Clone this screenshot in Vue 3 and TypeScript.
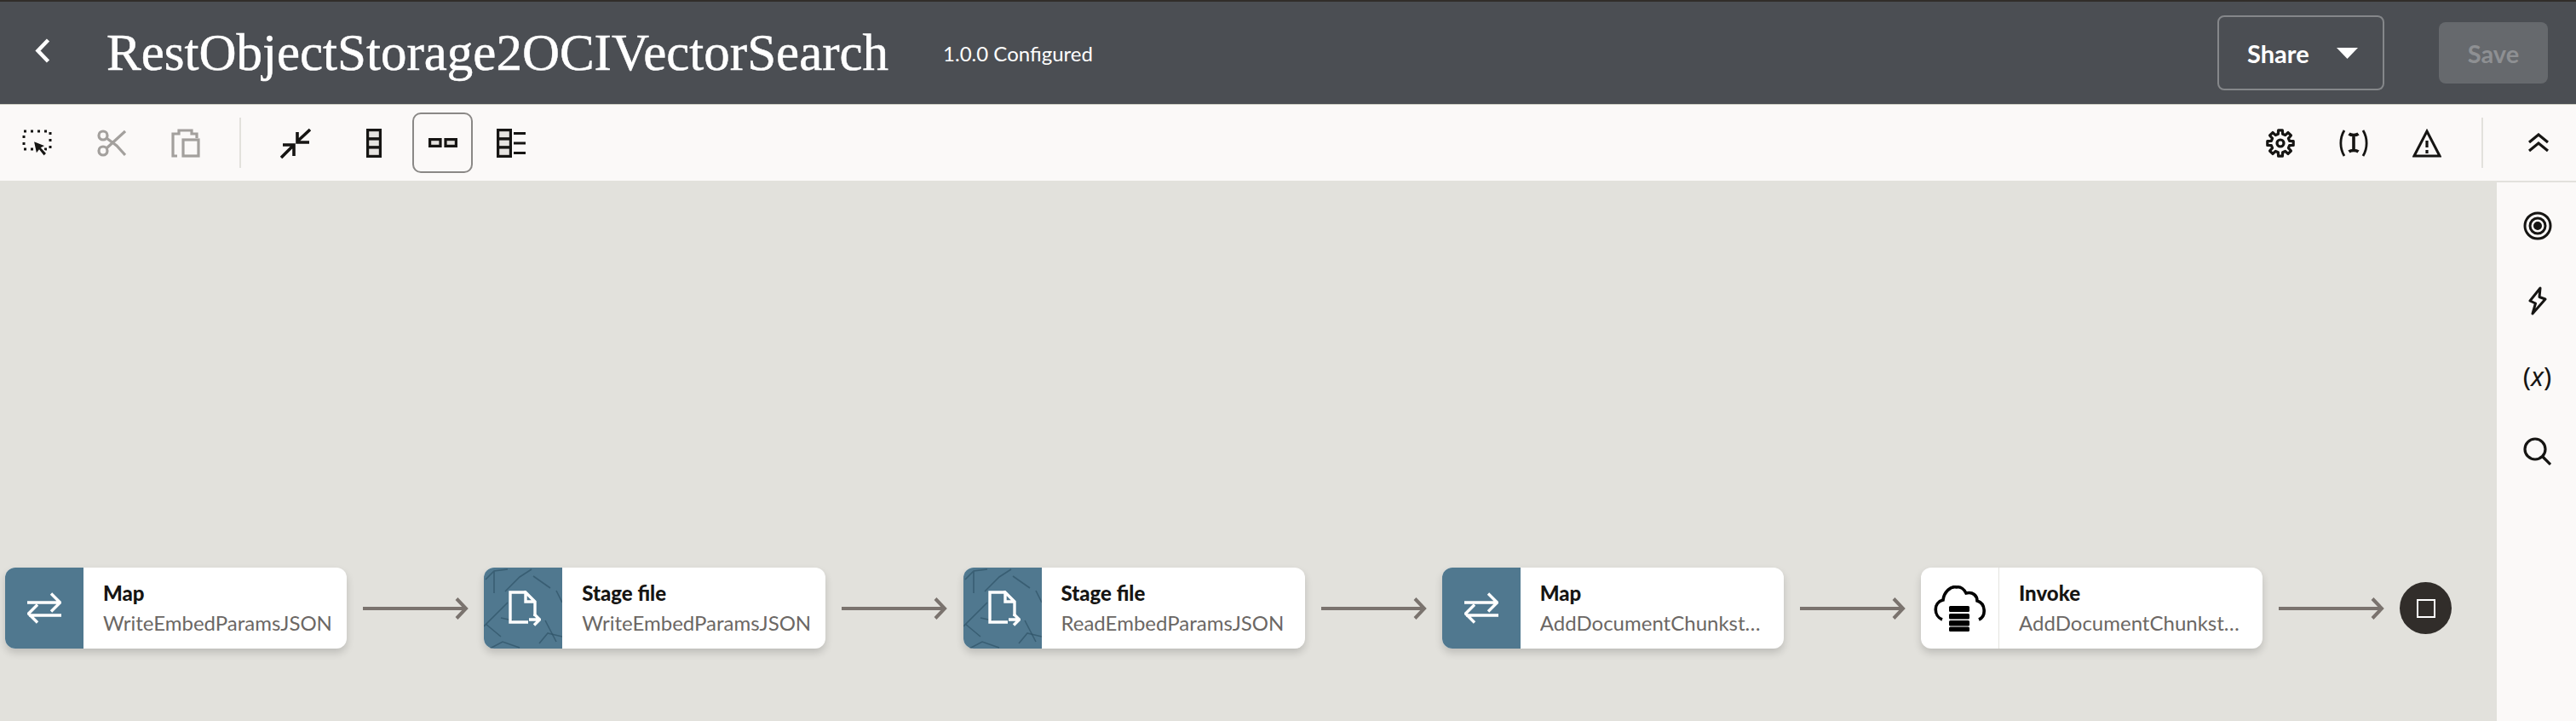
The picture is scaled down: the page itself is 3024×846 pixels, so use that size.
<template>
  <div class="app">
    <header class="header">
      <button class="back">
        <svg width="18" height="29" viewBox="0 0 18 29"><path d="M15.5 2 L3.5 14.5 L15.5 27" fill="none" stroke="#fff" stroke-width="4.5" /></svg>
      </button>
      <h1 class="title">RestObjectStorage2OCIVectorSearch</h1>
      <span class="version">1.0.0 Configured</span>
      <button class="share">
        Share
        <svg width="25" height="13" viewBox="0 0 25 13"><path d="M0 0 H25 L12.5 13 Z" fill="#fff" /></svg>
      </button>
      <button class="save">Save</button>
    </header>

    <div class="toolbar">
      <button class="tool">
        <svg width="36" height="34" viewBox="0 0 36 34">
          <rect x="2" y="3" width="31" height="21" fill="none" stroke="#161513" stroke-width="3" stroke-dasharray="3 5" />
          <path d="M13 14 L28 20 L23 22.5 L29 29 L25.5 32.5 L20 25.5 L16.5 30 Z" fill="#161513" stroke="#fbf9f8" stroke-width="1.5" />
        </svg>
      </button>
      <button class="tool">
        <svg width="34" height="32" viewBox="0 0 34 32" fill="none" stroke="#a3a09d" stroke-width="3.2">
          <circle cx="7" cy="7" r="5" />
          <circle cx="7" cy="25" r="5" />
          <path d="M11 10 L23 19 L33 30 M11 22 L33 2" />
        </svg>
      </button>
      <button class="tool">
        <svg width="34" height="34" viewBox="0 0 34 34" fill="none" stroke="#a3a09d" stroke-width="3.2">
          <path d="M7 32 H2 V6 H9 V2 H24 V6 H30 V11" />
          <rect x="14" y="13" width="18" height="19" />
        </svg>
      </button>
      <span class="divider"></span>
      <button class="tool">
        <svg width="36" height="36" viewBox="0 0 36 36" fill="none" stroke="#161513" stroke-width="3.6">
          <path d="M35 2 L20 16 M20 5 V17 H34" />
          <path d="M1 35 L16 20 M16 33 V20 H3" />
        </svg>
      </button>
      <button class="tool wide">
        <svg width="18" height="34" viewBox="0 0 18 34" fill="#e6e4e1" stroke="#161513" stroke-width="3.2">
          <rect x="1.6" y="1.6" width="14.8" height="10.4" /><rect x="1.6" y="12" width="14.8" height="10" /><rect x="1.6" y="22" width="14.8" height="10.4" />
        </svg>
      </button>
      <button class="tool active">
        <svg width="34" height="11" viewBox="0 0 34 11" fill="#e6e4e1" stroke="#161513" stroke-width="3.2">
          <rect x="1.6" y="1.6" width="12.4" height="7.8" /><rect x="20" y="1.6" width="12.4" height="7.8" />
        </svg>
      </button>
      <button class="tool near">
        <svg width="34" height="34" viewBox="0 0 34 34" fill="#e6e4e1" stroke="#161513" stroke-width="3.2">
          <rect x="1.6" y="1.6" width="14.8" height="10.4" /><rect x="1.6" y="12" width="14.8" height="10" /><rect x="1.6" y="22" width="14.8" height="10.4" />
          <path d="M20 5.5 H34 M20 17 H34 M20 28.5 H34" fill="none" />
        </svg>
      </button>
      <div class="toolbar-right">
        <button class="tool">
          <svg width="34" height="34" viewBox="0 0 34 34" fill="none" stroke="#161513">
            <circle cx="17" cy="17" r="4" stroke-width="3.2" />
            <path :d="gearPath" stroke-width="3.2" stroke-linejoin="round" />
          </svg>
        </button>
        <button class="tool">
          <svg width="34" height="32" viewBox="0 0 34 32" fill="none" stroke="#161513" stroke-width="2.8">
            <path d="M6 1 C0.5 10 0.5 22 6 31 M28 1 C33.5 10 33.5 22 28 31" />
            <path d="M11.5 5 C14 7 20 7 22.5 5 M11.5 26 C14 24 20 24 22.5 26 M17 6 V25" stroke-width="3.6" />
          </svg>
        </button>
        <button class="tool">
          <svg width="34" height="34" viewBox="0 0 34 34" fill="none" stroke="#161513" stroke-width="3">
            <path d="M17 3 L32 32 H2 Z" stroke-linejoin="miter" />
            <path d="M17 14 V22 M17 25 V29" stroke-width="3.2" />
          </svg>
        </button>
        <span class="divider right"></span>
        <button class="tool last">
          <svg width="24" height="23" viewBox="0 0 24 23" fill="none" stroke="#161513" stroke-width="3.2">
            <path d="M1 11 L12 2 L23 11 M1 21 L12 12 L23 21" />
          </svg>
        </button>
      </div>
    </div>

    <div class="body">
      <main class="canvas">
        <div class="flow">
          <template v-for="node in nodes" :key="node.name + node.type">
            <div class="node">
              <div class="node-icon" :class="node.kind">
                <svg v-if="node.kind === 'stage'" class="pattern" width="92" height="95" viewBox="0 0 92 95" fill="none" stroke="#2f5367" stroke-opacity="0.7" stroke-width="1.6">
                  <path v-for="d in patternLines" :key="d" :d="d" />
                </svg>
                <svg v-if="node.kind === 'map'" width="40" height="37" viewBox="0 0 40 37" fill="none" stroke="#fff" stroke-width="3.4">
                  <path d="M0 12 H38 M28 1.5 L38.5 12 L28 22.5" />
                  <path d="M40 27 H2 M12 14.5 L1.5 25 L12 35.5" />
                </svg>
                <svg v-else-if="node.kind === 'stage'" class="glyph" width="38" height="42" viewBox="0 0 38 42" fill="none" stroke="#fff" stroke-width="3.4">
                  <path d="M20 2 H2 V37 H23 M31 30 V13 L20 2 V13 H31" />
                  <path d="M24 34 H36 M30 27.5 L36.5 34 L30 40.5" />
                </svg>
                <svg v-else width="62" height="54" viewBox="0 0 62 54">
                  <path d="M10 40 C0 36 -1 20 11 17 C12 8 20 0 27 2 C32 1 36 5 38 9 C46 7 51 12 51 18 C61 21 62 36 53 40" fill="none" stroke="#000" stroke-width="3.6" />
                  <rect x="18" y="24" width="24" height="7" rx="1.5" />
                  <rect x="18" y="33" width="24" height="6.5" rx="1.5" />
                  <rect x="18" y="41" width="24" height="6.5" rx="1.5" />
                  <rect x="18" y="48.5" width="24" height="5.5" rx="1.5" />
                </svg>
              </div>
              <div class="node-text">
                <div class="node-type">{{ node.type }}</div>
                <div class="node-name">{{ node.name }}</div>
              </div>
            </div>
            <div class="link">
              <svg width="124" height="26" viewBox="0 0 124 26" fill="none" stroke="#7a736e" stroke-width="4">
                <path d="M0 13 H121 M110 1.5 L121 13 L110 24.5" />
              </svg>
            </div>
          </template>
          <div class="end">
            <span class="end-square"></span>
          </div>
        </div>
      </main>
      <aside class="sidebar">
        <button class="side-btn">
          <svg width="34" height="34" viewBox="0 0 34 34" fill="none" stroke="#161513" stroke-width="3">
            <circle cx="17" cy="17" r="15" /><circle cx="17" cy="17" r="9" /><circle cx="17" cy="17" r="3.5" fill="#161513" />
          </svg>
        </button>
        <button class="side-btn">
          <svg width="22" height="34" viewBox="0 0 22 34" fill="none" stroke="#161513" stroke-width="3" stroke-linejoin="round">
            <path d="M14 2 L2 17 L8.5 20 L5 32 L20 15 L13 12.5 Z" />
          </svg>
        </button>
        <button class="side-btn">
          <span class="var-icon">(<i>x</i>)</span>
        </button>
        <button class="side-btn">
          <svg width="33" height="33" viewBox="0 0 33 33" fill="none" stroke="#161513" stroke-width="3.2">
            <circle cx="14" cy="14" r="12" /><path d="M23 23 L32 32" />
          </svg>
        </button>
      </aside>
    </div>
  </div>
</template>

<script setup lang="ts">
interface FlowNode {
  kind: 'map' | 'stage' | 'invoke';
  type: string;
  name: string;
}

const nodes: FlowNode[] = [
  { kind: 'map', type: 'Map', name: 'WriteEmbedParamsJSON' },
  { kind: 'stage', type: 'Stage file', name: 'WriteEmbedParamsJSON' },
  { kind: 'stage', type: 'Stage file', name: 'ReadEmbedParamsJSON' },
  { kind: 'map', type: 'Map', name: 'AddDocumentChunkstoVectorSearch' },
  { kind: 'invoke', type: 'Invoke', name: 'AddDocumentChunkstoVectorSearch' }
];

// the faint scratch texture on the stage file tile
const patternLines = [
  'M12 4 L12 30 M2 14 L12 4 L28 2',
  'M25 28 L42 11 L56 2',
  'M0 69 L28 41 M2 66 L20 81',
  'M20 59 L34 62',
  'M72 62 L85 87',
  'M85 27 L92 41 M58 10 L78 24',
  'M65 89 L75 77 L92 81',
  'M7 95 L22 87 L42 94'
];

// eight tooth gear outline, centred in a 34 box
function buildGear(): string {
  const pt = (deg: number, r: number) => {
    const a = (deg * Math.PI) / 180;
    return `${(17 + r * Math.cos(a)).toFixed(2)} ${(17 + r * Math.sin(a)).toFixed(2)}`;
  };
  const parts: string[] = [];
  for (let i = 0; i < 8; i++) {
    const c = i * 45 - 90;
    parts.push(pt(c - 14, 11), pt(c - 9, 15.4), pt(c + 9, 15.4), pt(c + 14, 11));
  }
  return `M${parts.join(' L')} Z`;
}

const gearPath = buildGear();
</script>

<style>
html,
body {
  margin: 0;
  background: #e2e1dc;
}
</style>

<style scoped>
.app {
  width: 3024px;
  height: 846px;
  display: flex;
  flex-direction: column;
  overflow: hidden;
  font-family: Lato, "Noto Sans", sans-serif;
  color: #161513;
}

button {
  font-family: inherit;
  background: none;
  border: none;
  padding: 0;
}

.header {
  box-sizing: border-box;
  height: 123px;
  flex-shrink: 0;
  display: flex;
  align-items: center;
  background: #4b4e53;
  border-top: 2px solid #312d2a;
  border-bottom: 1px solid #cfcfc4;
  padding: 0 33px 0 41px;
}

.back {
  display: flex;
  margin-bottom: 6px;
}

.title {
  margin: 0 0 0 66px;
  font-family: "Liberation Serif", serif;
  font-size: 61px;
  font-weight: 400;
  -webkit-text-stroke: 0.5px #fff;
  color: #fff;
  white-space: nowrap;
}

.version {
  margin-left: 64px;
  font-size: 24px;
  color: #fff;
}

.share {
  box-sizing: border-box;
  margin-left: auto;
  width: 196px;
  height: 88px;
  display: flex;
  align-items: center;
  gap: 32px;
  padding-left: 33px;
  border: 2px solid #85878a;
  border-radius: 8px;
  color: #fff;
  font-size: 29px;
  font-weight: 700;
}

.save {
  margin-left: 64px;
  width: 128px;
  height: 72px;
  border-radius: 8px;
  background: #66696d;
  color: #8e9093;
  font-size: 29px;
  font-weight: 700;
}

.toolbar {
  box-sizing: border-box;
  height: 89px;
  flex-shrink: 0;
  display: flex;
  align-items: center;
  gap: 16px;
  padding: 0 9px 0 8px;
  background: #fbf9f8;
}

.tool {
  box-sizing: border-box;
  width: 71px;
  height: 71px;
  flex-shrink: 0;
  display: flex;
  align-items: center;
  justify-content: center;
  border: 2px solid transparent;
  border-radius: 10px;
}

.tool.wide {
  margin-left: 5px;
}

.tool.active {
  margin-left: -6px;
  border-color: #8a8886;
}

.tool.near {
  margin-left: -7px;
}

.divider {
  width: 2px;
  height: 59px;
  margin: 0 12px;
  background: #e2e1dc;
  flex-shrink: 0;
}

.toolbar-right {
  margin-left: auto;
  display: flex;
  align-items: center;
  gap: 15px;
}

.divider.right {
  margin: 0 8px 0 14px;
}

.tool.last {
  margin-left: 6px;
}

.body {
  flex: 1;
  min-height: 0;
  display: flex;
}

.canvas {
  flex: 1;
  min-width: 0;
  background: #e2e1dc;
  padding: 454px 0 0 6px;
}

.flow {
  display: flex;
  align-items: flex-start;
}

.node {
  width: 401px;
  height: 95px;
  flex-shrink: 0;
  display: flex;
  background: #fff;
  border-radius: 12px;
  box-shadow: 0 5px 10px rgba(0, 0, 0, 0.16);
  overflow: hidden;
}

.node-icon {
  position: relative;
  box-sizing: border-box;
  width: 92px;
  flex-shrink: 0;
  display: flex;
  align-items: center;
  justify-content: center;
}

.node-icon.map,
.node-icon.stage {
  background: #50788f;
}

.node-icon.invoke {
  border-right: 1px solid #e4e3df;
}

.pattern {
  position: absolute;
  inset: 0;
}

.glyph {
  position: relative;
  margin-left: 4px;
}

.node-text {
  flex: 1;
  min-width: 0;
  padding: 14px 16px 0 23px;
}

.node-type {
  font-size: 24px;
  line-height: 32px;
  font-weight: 900;
}

.node-name {
  margin-top: 3px;
  font-size: 24px;
  line-height: 32px;
  color: #6b6764;
  white-space: nowrap;
  overflow: hidden;
  text-overflow: ellipsis;
}

.link {
  width: 161.25px;
  height: 95px;
  flex-shrink: 0;
  display: flex;
  align-items: center;
  padding-left: 19px;
  box-sizing: border-box;
}

.end {
  width: 61px;
  height: 61px;
  margin-top: 17px;
  flex-shrink: 0;
  border-radius: 50%;
  background: #312d2a;
  display: flex;
  align-items: center;
  justify-content: center;
}

.end-square {
  box-sizing: border-box;
  width: 22px;
  height: 22px;
  border: 2px solid #fff;
}

.sidebar {
  box-sizing: border-box;
  width: 93px;
  flex-shrink: 0;
  margin-top: 2px;
  padding: 26px 0 0 0;
  background: #fbf9f8;
  display: flex;
  flex-direction: column;
  align-items: center;
  gap: 38px;
}

.side-btn {
  width: 50px;
  height: 50px;
  display: flex;
  align-items: center;
  justify-content: center;
  margin-left: 2px;
}

.var-icon {
  font-family: "Noto Sans", sans-serif;
  font-size: 31px;
  font-weight: 400;
  color: #161513;
  white-space: nowrap;
}
</style>
